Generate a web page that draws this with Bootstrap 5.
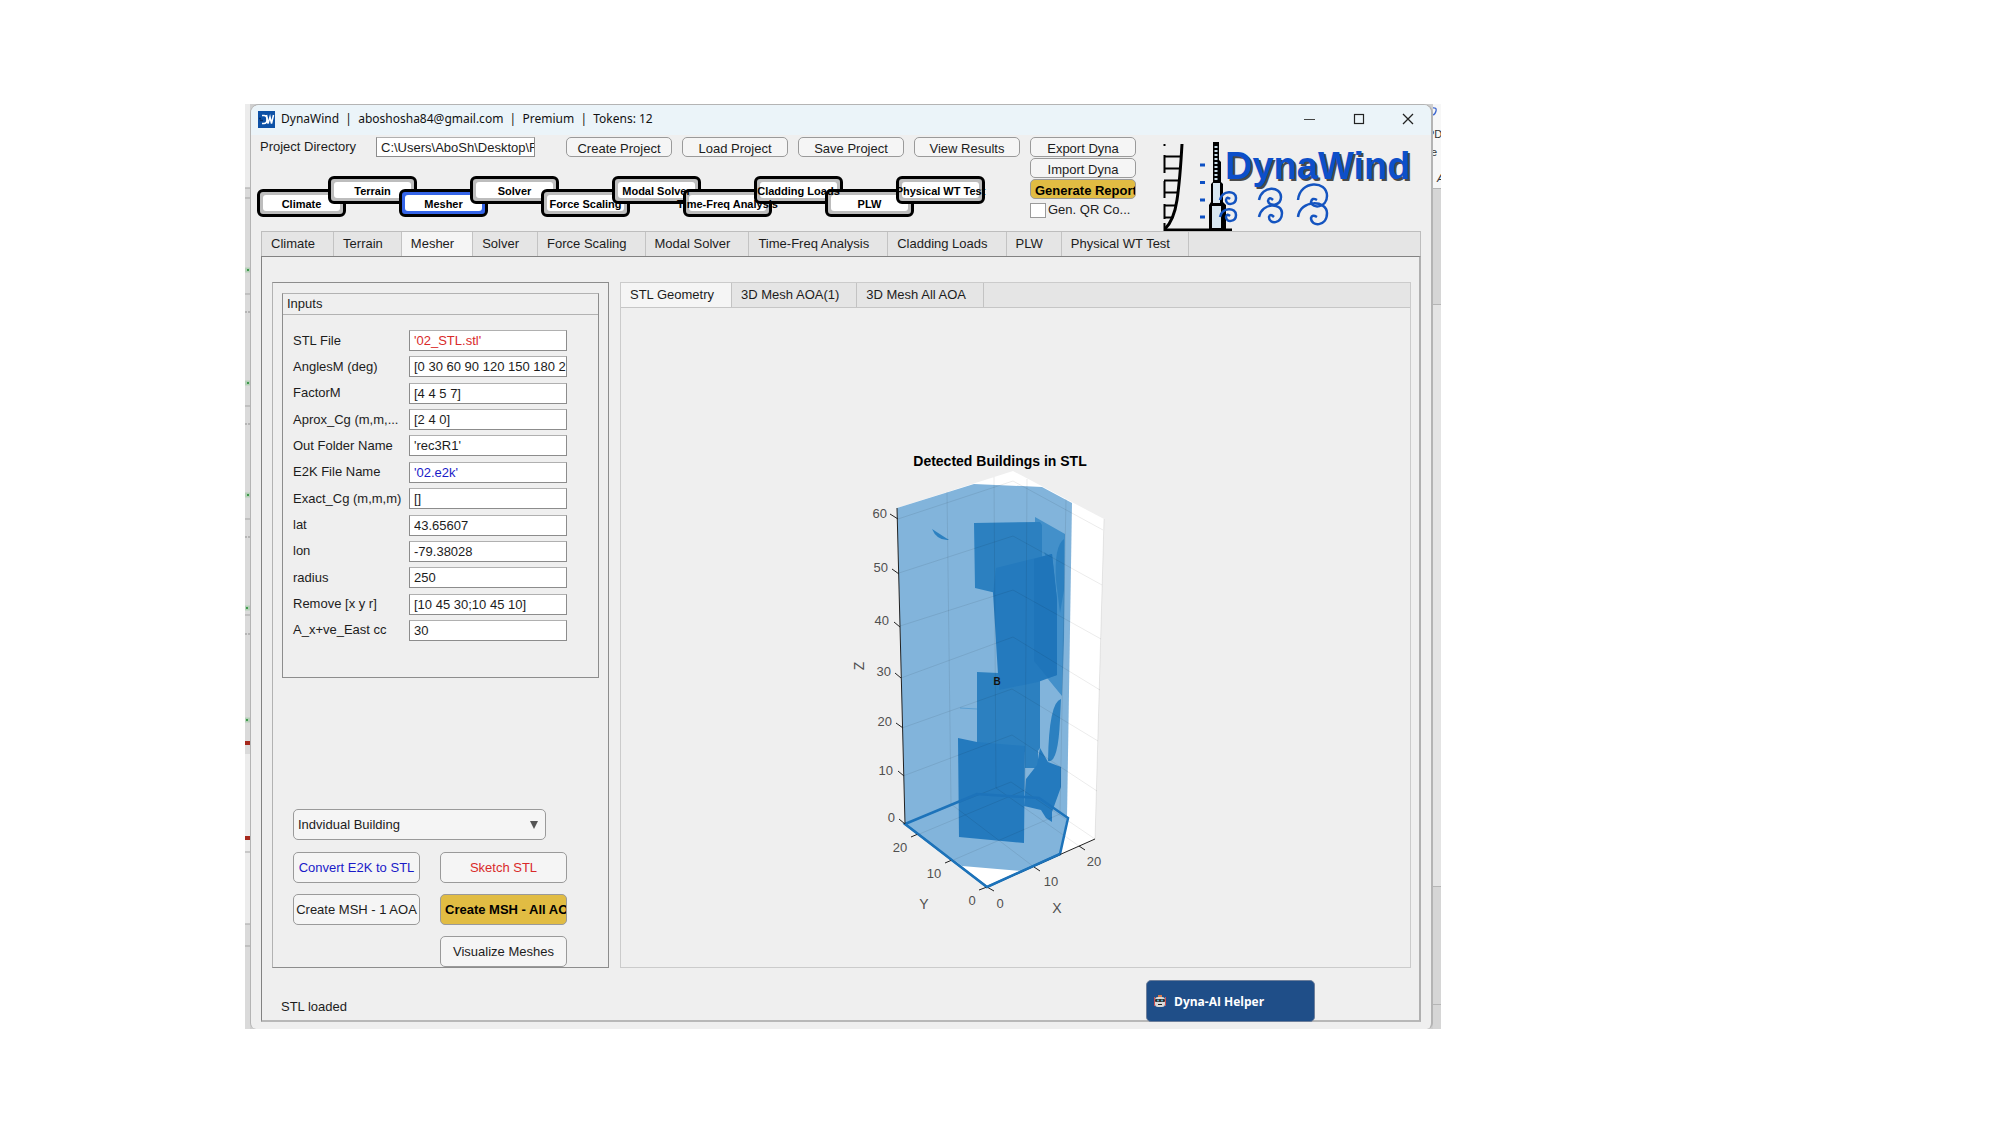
<!DOCTYPE html>
<html lang="en">
<head>
<meta charset="utf-8">
<meta name="viewport" content="width=device-width, initial-scale=1">
<title>DynaWind</title>
<link rel="stylesheet" href="https://cdn.jsdelivr.net/npm/bootstrap@5.3.0/dist/css/bootstrap.min.css">
<style>
body{background:#fff;color:#1c1c1c;font:13px/16px "Liberation Sans",Arial,sans-serif;padding:104px 560px 96px 245px}
.desk{background:#cfcfcf;height:925px}
.edge-l{width:5px;flex:none}
.edge-r{width:8px;flex:none}
.win{background:#efefef;border:1px solid #b4b4b4;border-width:1px 2px 0 1px;border-radius:9px 9px 6px 6px;min-width:0;overflow:hidden}
.titlebar{height:30px;background:#ebf4f9;padding:0 13px 2px 7px;color:#111}
.caption-txt{font:12px/24px "Noto Sans","Open Sans",sans-serif;white-space:pre;padding-left:6px}
.wins{gap:29px}
.wbtn{border:0;background:none;padding:0;width:20px;height:24px;display:flex;align-items:center;justify-content:center}
.head{padding:2px 0 0 6px;height:96px}
.prow{padding-left:3px}
.prow label{width:116px}
.fld{border:1px solid #8c8c8c;border-top-color:#b0b0b0;background:#fff;border-radius:0;height:21px;padding:0 0 0 4px;font:inherit;color:#1c1c1c;min-width:0}
.prow .fld{width:159px;height:20px;margin-right:31px}
.gap-btn{gap:10px}
.pbtn{border:1px solid #9a9a9a;border-radius:5px;background:#f5f5f5;color:#1c1c1c;font:inherit;line-height:16px;height:31px;width:127px;padding:0 2px;white-space:nowrap;overflow:hidden}
.pbtn:hover{background:#fff}
.slim{height:20px;width:106px;padding:3px 4px 0;flex:none}
.gold,.gold:hover{background:#e1bc43;color:#000;font-weight:bold;text-align:left;padding-left:4px;padding-right:0}
.gold span{display:block;overflow:hidden}
.blue-t{color:#1a1ac8}
.red-t{color:#d92a2a}
.flow{margin-top:19px;height:41px}
.node{flex:none;width:89px;height:28px;margin-right:-18px;border:3px solid #000;border-radius:6px;background:#bdbdbd;padding:3px;text-decoration:none}
.node b{display:flex;justify-content:center;background:#fff;border-radius:3px;height:16px;font-size:11px;line-height:18px;color:#000;white-space:nowrap}
.node span{position:relative;z-index:2}
.node.low{margin-top:13px}
.node.now{background:#3565e8}
.tools{width:106px;margin-left:10px;gap:1px}
.qr{padding-top:2px}
.qr input.form-check-input{width:16px;height:15px;margin:0;border:1px solid #9a9a9a;border-radius:0;flex:none}
.qr label{margin-left:2px}
.brand{margin:3px 0 0 27px;flex:none}
.tabs{background:#e5e5e5;border:1px solid #bdbdbd;margin:0}
.tabs .tab{border:0;border-right:1px solid #c3c3c3;background:none;padding:0 18px 0 9px;height:24px;font:inherit;color:#1c1c1c;white-space:nowrap}
.right .tabs .tab{padding-right:17px}
.tabs .tab.active{background:#f5f5f5}
.main{margin:0 10px}
.pane{border:1px solid #828282;border-right:2px solid #b0b0b0;border-bottom:2px solid #b8b8b8;height:766px;padding:25px 8px 0 10px}
.cols{gap:11px;height:686px}
.left{width:337px;flex:none;border:1px solid #8d8d8d;border-left-color:#b2b2b2;padding:10px 9px 0}
.grp{border:1px solid #8d8d8d;border-top-color:#b2b2b2;height:385px}
.grp h2{font:inherit;line-height:20px;height:21px;margin:0;padding-left:4px;border-bottom:1px solid #b2b2b2}
.rows{height:311px;margin:15px 0 0 10px}
.rows label{width:116px;white-space:nowrap}
.rows .fld{width:158px}
.acts{margin:131px 0 0 11px;width:274px;row-gap:11px}
.acts .pbtn,.pick select{height:31px}
.pick{width:253px;position:relative;padding-bottom:1px}
.pick select{width:100%;display:block;appearance:none;border:1px solid #9a9a9a;border-radius:5px;background:#f5f5f5;padding:0 4px;font:inherit;color:#1c1c1c}
.pick svg{position:absolute;right:8px;top:12px;pointer-events:none}
.right{border:1px solid #cbcbcb;min-width:0}
.right .tabs{border-color:#c6c6c6;border-width:0 0 1px}
.plot{margin-top:132px;padding-right:2px}
.foot{padding:12px 96px 0 9px}
.foot .st{padding-top:19px}
.aibtn{width:169px;height:42px;background:#1f4e88;border:1px solid #6d7f9b;border-radius:5px;color:#fff;font:bold 12px/16px "Open Sans","Noto Sans",sans-serif;padding:1px 7px 0}
.aibtn span{margin-left:8px}
</style>
</head>
<body>
<div class="desk d-flex">
  <svg class="edge-l" width="5" height="925" viewBox="0 0 5 925" aria-hidden="true">
    <rect width="5" height="925" fill="#dadada"/>
    <path d="M0 0h5v84H0zM0 650h5v170H0z" fill="#ececec"/>
    <path d="M0 84h5M0 94h5M0 190h5M0 302h5M0 415h5M0 511h5M0 820h5M0 842h5M0 748h5" stroke="#a5a5a5"/>
    <path d="M0 208h5M0 320h5M0 433h5M0 530h5" stroke="#8f8f8f" stroke-dasharray="2 1"/>
    <path d="M0 166h5M0 279h5M0 391h5M0 504h5M0 616h5" stroke="#b5cfb8" stroke-width="5"/>
    <path d="M2 166h2M2 279h2M2 391h2M1 504h2M1 616h2" stroke="#3f9a4c" stroke-width="2"/>
    <path d="M0 639h5M0 734h5" stroke="#a5281c" stroke-width="4"/>
  </svg>
  <div class="win flex-grow-1 d-flex flex-column">
    <header class="titlebar d-flex align-items-center">
      <svg width="17" height="17" viewBox="0 0 17 17" aria-hidden="true"><rect width="17" height="17" fill="#0d51a6"/><path d="M4 4.500h2q3 0 3 4t-3 4H4" fill="none" stroke="#fff" stroke-width="1.600"/><path d="M8.500 4l1.500 8.500L12 6l1.500 6.500L15.500 4" fill="none" stroke="#fff" stroke-width="1.500"/><path d="M1 7.500h2M2 9.500h3" stroke="#0a2c60" stroke-width="1.500"/></svg>
      <span class="caption-txt flex-grow-1">DynaWind  |  aboshosha84@gmail.com  |  Premium  |  Tokens: 12</span>
      <div class="wins d-flex">
        <button class="wbtn" aria-label="Minimize"><svg width="12" height="12"><path d="M0 6.500h11" stroke="#444"/></svg></button>
        <button class="wbtn" aria-label="Maximize"><svg width="12" height="12"><rect x="1.500" y="1.500" width="9" height="9" fill="none" stroke="#222" stroke-width="1.200"/></svg></button>
        <button class="wbtn" aria-label="Close"><svg width="12" height="12"><path d="M1 1l10 10M11 1L1 11" stroke="#222" stroke-width="1.300"/></svg></button>
      </div>
    </header>

    <section class="head d-flex">
      <div>
        <div class="prow d-flex align-items-center">
          <label for="dir">Project Directory</label>
          <input class="fld" id="dir" value="C:\Users\AboSh\Desktop\F">
          <div class="d-flex gap-btn">
            <button class="pbtn slim">Create Project</button>
            <button class="pbtn slim">Load Project</button>
            <button class="pbtn slim">Save Project</button>
            <button class="pbtn slim">View Results</button>
          </div>
        </div>
        <nav class="flow d-flex" aria-label="Workflow">
          <a class="node low" href="#"><b><span>Climate</span></b></a>
          <a class="node" href="#"><b><span>Terrain</span></b></a>
          <a class="node low now" href="#"><b><span>Mesher</span></b></a>
          <a class="node" href="#"><b><span>Solver</span></b></a>
          <a class="node low" href="#"><b><span>Force Scaling</span></b></a>
          <a class="node" href="#"><b><span>Modal Solver</span></b></a>
          <a class="node low" href="#"><b><span>Time-Freq Analysis</span></b></a>
          <a class="node" href="#"><b><span>Cladding Loads</span></b></a>
          <a class="node low" href="#"><b><span>PLW</span></b></a>
          <a class="node" href="#"><b><span>Physical WT Test</span></b></a>
        </nav>
      </div>
      <div class="tools d-flex flex-column">
        <button class="pbtn slim">Export Dyna</button>
        <button class="pbtn slim">Import Dyna</button>
        <button class="pbtn slim gold"><span>Generate Report</span></button>
        <div class="qr d-flex align-items-center"><input class="form-check-input" type="checkbox" id="qr"><label for="qr">Gen. QR Co...</label></div>
      </div>
      <svg class="brand" width="250" height="91" viewBox="1163 140 250 91" role="img" aria-label="DynaWind">
        <g fill="none" stroke="#000">
          <path d="M1164.500 144v2M1164.500 155v18M1164.500 181v17M1164.500 204v15M1164.500 223v8M1164 156.500h16M1164 168.500h16M1164 180.500h15M1164 192.500h14M1164 205.500h12M1164 217.500h8" stroke-width="2"/>
          <path d="M1182 144Q1180 180 1177 200T1165 229" stroke-width="3"/>
          <path d="M1164 230h68" stroke-width="3"/>
        </g>
        <path d="M1213 142h6v18l2 2v20l2 2v18l3 3v25h-17v-25l2-3v-18l2-2v-20z" fill="#000"/>
        <path d="M1213 183h7v20h-7zM1212 206h9v22h-9z" fill="#d7e6f0"/>
        <path d="M1216 146v36" stroke="#c9dde9" stroke-width="3" stroke-dasharray="2 2"/>
        <path d="M1200 165h5M1200 182.500h5M1200 200h5M1200 217h5" stroke="#0d50c4" stroke-width="3"/>
        <g fill="none" stroke="#1454c0" stroke-width="2.500">
          <path id="curl" d="M1220 200C1222 190 1236 190 1236 198C1236 205 1226 206 1226 200Q1227 196 1230 199"/>
          <use href="#curl" y="17"/>
          <path d="M1259 200C1262 185 1281 186 1281 197C1281 206 1269 207 1268 201Q1269 196 1273 200"/>
          <path d="M1259 217C1262 202 1282 203 1282 213C1282 224 1269 225 1269 217Q1270 213 1274 217"/>
          <path d="M1298 200C1300 180 1327 180 1327 196C1327 208 1312 209 1311 202Q1312 197 1317 200"/>
          <path d="M1298 217C1300 199 1327 200 1327 213C1327 227 1311 227 1311 218Q1312 214 1317 217"/>
        </g>
        <g font-family="Liberation Sans,Arial,sans-serif" font-weight="bold" font-size="38"><text x="1227" y="181" fill="#4a4a4a">DynaWind</text><text x="1225" y="179" fill="#0d4fc9">DynaWind</text></g>
      </svg>
    </section>

    <main class="main">
      <div class="tabs d-flex border-bottom-0" role="tablist">
        <button class="tab" role="tab">Climate</button><button class="tab" role="tab">Terrain</button><button class="tab active" role="tab">Mesher</button><button class="tab" role="tab">Solver</button><button class="tab" role="tab">Force Scaling</button><button class="tab" role="tab">Modal Solver</button><button class="tab" role="tab">Time-Freq Analysis</button><button class="tab" role="tab">Cladding Loads</button><button class="tab" role="tab">PLW</button><button class="tab" role="tab">Physical WT Test</button>
      </div>
      <div class="pane">
        <div class="cols d-flex">
          <section class="left">
            <div class="grp">
              <h2>Inputs</h2>
              <div class="rows d-flex flex-column justify-content-between">
                <div class="d-flex align-items-center"><label for="f1">STL File</label><input class="fld red-t" id="f1" value="'02_STL.stl'"></div>
                <div class="d-flex align-items-center"><label for="f2">AnglesM (deg)</label><input class="fld" id="f2" value="[0 30 60 90 120 150 180 2"></div>
                <div class="d-flex align-items-center"><label for="f3">FactorM</label><input class="fld" id="f3" value="[4 4 5 7]"></div>
                <div class="d-flex align-items-center"><label for="f4">Aprox_Cg (m,m,...</label><input class="fld" id="f4" value="[2 4 0]"></div>
                <div class="d-flex align-items-center"><label for="f5">Out Folder Name</label><input class="fld" id="f5" value="'rec3R1'"></div>
                <div class="d-flex align-items-center"><label for="f6">E2K File Name</label><input class="fld blue-t" id="f6" value="'02.e2k'"></div>
                <div class="d-flex align-items-center"><label for="f7">Exact_Cg (m,m,m)</label><input class="fld" id="f7" value="[]"></div>
                <div class="d-flex align-items-center"><label for="f8">lat</label><input class="fld" id="f8" value="43.65607"></div>
                <div class="d-flex align-items-center"><label for="f9">lon</label><input class="fld" id="f9" value="-79.38028"></div>
                <div class="d-flex align-items-center"><label for="f10">radius</label><input class="fld" id="f10" value="250"></div>
                <div class="d-flex align-items-center"><label for="f11">Remove [x y r]</label><input class="fld" id="f11" value="[10 45 30;10 45 10]"></div>
                <div class="d-flex align-items-center"><label for="f12">A_x+ve_East cc</label><input class="fld" id="f12" value="30"></div>
              </div>
            </div>
            <div class="acts d-flex flex-column">
              <div class="pick"><select aria-label="Building type"><option>Indvidual Building</option></select><svg width="8" height="8" aria-hidden="true"><path d="M0 0h8L4 8z" fill="#555"/></svg></div>
              <div class="d-flex justify-content-between"><button class="pbtn blue-t">Convert E2K to STL</button><button class="pbtn red-t">Sketch STL</button></div>
              <div class="d-flex justify-content-between"><button class="pbtn">Create MSH - 1 AOA</button><button class="pbtn gold"><span>Create MSH - All AOA</span></button></div>
              <div class="d-flex justify-content-end"><button class="pbtn">Visualize Meshes</button></div>
            </div>
          </section>

          <section class="right flex-grow-1">
            <div class="tabs d-flex" role="tablist"><button class="tab active" role="tab">STL Geometry</button><button class="tab" role="tab">3D Mesh AOA(1)</button><button class="tab" role="tab">3D Mesh All AOA</button></div>
            <div class="plot d-flex justify-content-center">
              <svg width="350" height="490" viewBox="840 440 350 490" role="img" aria-label="Detected Buildings in STL" font-family="Liberation Sans,Arial,sans-serif" font-size="13" fill="#505050">
                <path d="M897 508L1013 471 1104 519 1095 839 987 887 905 824z" fill="#fff"/>
                <!-- building envelope -->
                <path d="M897 508L974 484 1042 487 1072 503 1067 818 1060 854 1022 871 962 866 905 824z" fill="#82b4db"/>
                <!-- inner faces -->
                <path d="M1035 517L1065 534 1064 640 1062 696 1048 679 1035 668z" fill="#4390ca"/>
                <path d="M974 523L1040 522 1042 525V560L996 569V593L975 588z" fill="#2c80c0"/>
                <path d="M1064 539Q1054 546 1056 580L1060 613 1064 590zM1044 552l8 5v16z" fill="#2c80c0"/>
                <path d="M977 672L998 673 999 688 1040 678V748L1025 768V752L977 744z" fill="#2c80c0"/>
                <path d="M996 568L1052 554 1057 600V675L1038 682 999 690 993 593z" fill="#247abe"/>
                <path d="M1052 554L1057 600V675L1048 678 1034 661V559z" fill="#1f75ba"/>
                <path d="M958 738L977 742 1025 746 1024 843 959 837z" fill="#247abe"/>
                <path d="M1025 746H1038V768H1025z" fill="#2c80c0"/>
                <path d="M1040 748L1048 762 1061 767V787L1052 812V822L1046 818 1041 810 1024 806 1026 779 1037 765z" fill="#247abe"/>
                <path d="M1061 699Q1049 702 1048 761 1058 764 1060 720z" fill="#2c80c0"/>
                <path d="M932 529l17 11q-12 1-17-11z" fill="#2c80c0"/>
                <path d="M960 708l17 1" stroke="#5b9fd2" fill="none"/>
                <!-- grid -->
                <path d="M898 519L1013 481 1103 530M899 573L1013 536 1102 585M900 626L1013 590 1101 639M901 678L1013 637 1100 690M902 728L1012 689 1098 741M903 776L1012 735 1097 791M905 824L1011 782 1095 839M947 492L951 804M994 477L996 788M1027 479L1025 790M1066 499L1060 814M951 804L1034 867M951 861L1060 814M1104 519L1095 839M917 835L1025 790M996 788L1079 846" fill="none" stroke="#000" stroke-opacity=".08"/>
                <path d="M905 824L977 794 1039 798 1068 818 1060 854 987 887z" fill="none" stroke="#1d73ba" stroke-width="2.500"/>
                <path d="M897 508L905 824 987 887 1095 839M890 514l8 5M892 569l7 5M894 622l6 5M895 673l6 5M896 723l7 5M898 771l6 5M899 819l6 5M911 837l7-3M945 863l7-3M979 890l8-3M987 887l7 4M1034 867l6 4M1079 846l6 4" fill="none" stroke="#222"/>
                <path d="M905 824L987 887 1060 854" fill="none" stroke="#1d73ba" stroke-width="2"/>
                <g text-anchor="end"><text x="887" y="518">60</text><text x="888" y="572">50</text><text x="889" y="625">40</text><text x="891" y="676">30</text><text x="892" y="726">20</text><text x="893" y="775">10</text><text x="895" y="822">0</text></g>
                <g text-anchor="middle"><text x="900" y="852">20</text><text x="934" y="878">10</text><text x="972" y="905">0</text><text x="1000" y="908">0</text><text x="1051" y="886">10</text><text x="1094" y="866">20</text></g>
                <g font-size="14" text-anchor="middle"><text x="924" y="909">Y</text><text x="1057" y="913">X</text><text transform="translate(864 666) rotate(-90)">Z</text></g>
                <text x="997" y="685" font-size="10" font-weight="bold" fill="#111" text-anchor="middle">B</text>
                <text x="1000" y="466" font-size="14" font-weight="bold" fill="#000" text-anchor="middle">Detected Buildings in STL</text>
              </svg>
            </div>
          </section>
        </div>
        <div class="foot d-flex justify-content-between">
          <div class="st">STL loaded</div>
          <button class="aibtn d-flex align-items-center"><svg width="12" height="13" viewBox="0 0 12 13" aria-hidden="true"><path d="M.5 2v9M11.500 2v9" stroke="#d05050"/><rect x="1" y="2" width="10" height="10" rx="3" fill="#d9d9d9"/><rect x="4" y="0" width="4" height="2" fill="#d97a4a"/><rect x="1" y="4" width="10" height="3" rx="1" fill="#333"/><circle cx="4" cy="5.500" r="1" fill="#5fb4d8"/><circle cx="8" cy="5.500" r="1" fill="#5fb4d8"/><path d="M4 9.500h4" stroke="#222"/></svg><span>Dyna-AI Helper</span></button>
        </div>
      </div>
    </main>
  </div>
  <svg class="edge-r" width="8" height="925" viewBox="1 0 8 925" font-family="Liberation Sans,Arial,sans-serif" font-size="11" aria-hidden="true">
    <rect width="9" height="925" fill="#d6d6d6"/><rect width="9" height="84" fill="#f7f7f7"/><rect y="200" width="9" height="582" fill="#e4e4e4"/>
    <path d="M0 84.500h9M0 200.500h9M0 782.500h9M0 900.500h9" stroke="#b5b5b5"/>
    <path d="M0 4q5-1 4 3t-4 4" fill="none" stroke="#3c66d0" stroke-width="1.300"/>
    <text x="-5" y="34" fill="#333">PD</text><text x="-1" y="52" fill="#333">e</text><text x="5" y="78" fill="#333" font-style="italic">A</text>
  </svg>
</div>
<script src="https://cdn.jsdelivr.net/npm/bootstrap@5.3.0/dist/js/bootstrap.bundle.min.js"></script>
</body>
</html>
